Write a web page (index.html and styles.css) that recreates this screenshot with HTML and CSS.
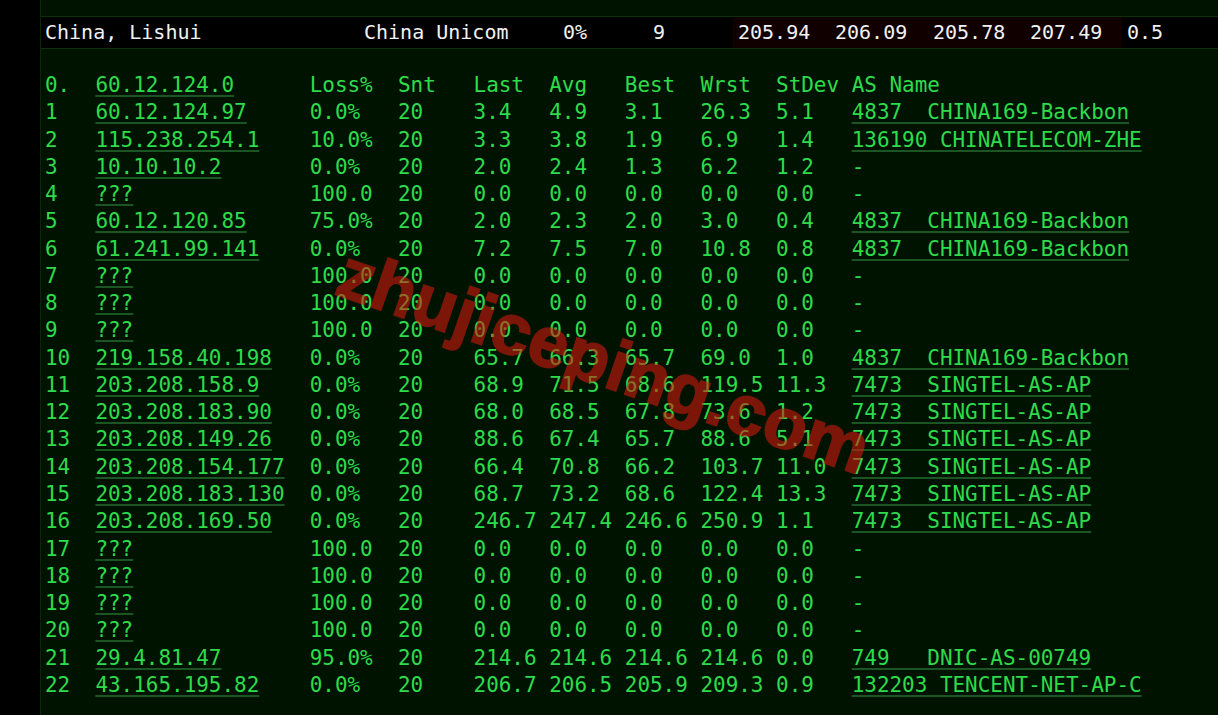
FILE: index.html
```html
<!DOCTYPE html>
<html>
<head>
<meta charset="utf-8">
<title>mtr</title>
<link rel="stylesheet" href="styles.css">
</head>
<body>
<div class="screen">
  <div class="gutter"></div>
  <div class="main">
    <div class="topgap"></div>
    <div class="summary">
      <div class="cell c1">China, Lishui</div>
      <div class="cell c2">China Unicom</div>
      <div class="cell c3">0%</div>
      <div class="cell c4">9</div>
      <div class="cell c5 hot">205.94</div>
      <div class="cell c6 hot">206.09</div>
      <div class="cell c7 hot">205.78</div>
      <div class="cell c8 hot">207.49</div>
      <div class="cell c9">0.5</div>
    </div>
    <div class="trace">
      <div class="row"><span>0.</span><span class="u">60.12.124.0</span><span>Loss%</span><span>Snt</span><span>Last</span><span>Avg</span><span>Best</span><span>Wrst</span><span>StDev</span><span>AS Name</span></div>
      <div class="row"><span>1</span><span class="u">60.12.124.97</span><span>0.0%</span><span>20</span><span>3.4</span><span>4.9</span><span>3.1</span><span>26.3</span><span>5.1</span><span class="u">4837  CHINA169-Backbon</span></div>
      <div class="row"><span>2</span><span class="u">115.238.254.1</span><span>10.0%</span><span>20</span><span>3.3</span><span>3.8</span><span>1.9</span><span>6.9</span><span>1.4</span><span class="u">136190 CHINATELECOM-ZHE</span></div>
      <div class="row"><span>3</span><span class="u">10.10.10.2</span><span>0.0%</span><span>20</span><span>2.0</span><span>2.4</span><span>1.3</span><span>6.2</span><span>1.2</span><span>-</span></div>
      <div class="row"><span>4</span><span class="u">???</span><span>100.0</span><span>20</span><span>0.0</span><span>0.0</span><span>0.0</span><span>0.0</span><span>0.0</span><span>-</span></div>
      <div class="row"><span>5</span><span class="u">60.12.120.85</span><span>75.0%</span><span>20</span><span>2.0</span><span>2.3</span><span>2.0</span><span>3.0</span><span>0.4</span><span class="u">4837  CHINA169-Backbon</span></div>
      <div class="row"><span>6</span><span class="u">61.241.99.141</span><span>0.0%</span><span>20</span><span>7.2</span><span>7.5</span><span>7.0</span><span>10.8</span><span>0.8</span><span class="u">4837  CHINA169-Backbon</span></div>
      <div class="row"><span>7</span><span class="u">???</span><span>100.0</span><span>20</span><span>0.0</span><span>0.0</span><span>0.0</span><span>0.0</span><span>0.0</span><span>-</span></div>
      <div class="row"><span>8</span><span class="u">???</span><span>100.0</span><span>20</span><span>0.0</span><span>0.0</span><span>0.0</span><span>0.0</span><span>0.0</span><span>-</span></div>
      <div class="row"><span>9</span><span class="u">???</span><span>100.0</span><span>20</span><span>0.0</span><span>0.0</span><span>0.0</span><span>0.0</span><span>0.0</span><span>-</span></div>
      <div class="row"><span>10</span><span class="u">219.158.40.198</span><span>0.0%</span><span>20</span><span>65.7</span><span>66.3</span><span>65.7</span><span>69.0</span><span>1.0</span><span class="u">4837  CHINA169-Backbon</span></div>
      <div class="row"><span>11</span><span class="u">203.208.158.9</span><span>0.0%</span><span>20</span><span>68.9</span><span>71.5</span><span>68.6</span><span>119.5</span><span>11.3</span><span class="u">7473  SINGTEL-AS-AP</span></div>
      <div class="row"><span>12</span><span class="u">203.208.183.90</span><span>0.0%</span><span>20</span><span>68.0</span><span>68.5</span><span>67.8</span><span>73.6</span><span>1.2</span><span class="u">7473  SINGTEL-AS-AP</span></div>
      <div class="row"><span>13</span><span class="u">203.208.149.26</span><span>0.0%</span><span>20</span><span>88.6</span><span>67.4</span><span>65.7</span><span>88.6</span><span>5.1</span><span class="u">7473  SINGTEL-AS-AP</span></div>
      <div class="row"><span>14</span><span class="u">203.208.154.177</span><span>0.0%</span><span>20</span><span>66.4</span><span>70.8</span><span>66.2</span><span>103.7</span><span>11.0</span><span class="u">7473  SINGTEL-AS-AP</span></div>
      <div class="row"><span>15</span><span class="u">203.208.183.130</span><span>0.0%</span><span>20</span><span>68.7</span><span>73.2</span><span>68.6</span><span>122.4</span><span>13.3</span><span class="u">7473  SINGTEL-AS-AP</span></div>
      <div class="row"><span>16</span><span class="u">203.208.169.50</span><span>0.0%</span><span>20</span><span>246.7</span><span>247.4</span><span>246.6</span><span>250.9</span><span>1.1</span><span class="u">7473  SINGTEL-AS-AP</span></div>
      <div class="row"><span>17</span><span class="u">???</span><span>100.0</span><span>20</span><span>0.0</span><span>0.0</span><span>0.0</span><span>0.0</span><span>0.0</span><span>-</span></div>
      <div class="row"><span>18</span><span class="u">???</span><span>100.0</span><span>20</span><span>0.0</span><span>0.0</span><span>0.0</span><span>0.0</span><span>0.0</span><span>-</span></div>
      <div class="row"><span>19</span><span class="u">???</span><span>100.0</span><span>20</span><span>0.0</span><span>0.0</span><span>0.0</span><span>0.0</span><span>0.0</span><span>-</span></div>
      <div class="row"><span>20</span><span class="u">???</span><span>100.0</span><span>20</span><span>0.0</span><span>0.0</span><span>0.0</span><span>0.0</span><span>0.0</span><span>-</span></div>
      <div class="row"><span>21</span><span class="u">29.4.81.47</span><span>95.0%</span><span>20</span><span>214.6</span><span>214.6</span><span>214.6</span><span>214.6</span><span>0.0</span><span class="u">749   DNIC-AS-00749</span></div>
      <div class="row"><span>22</span><span class="u">43.165.195.82</span><span>0.0%</span><span>20</span><span>206.7</span><span>206.5</span><span>205.9</span><span>209.3</span><span>0.9</span><span class="u">132203 TENCENT-NET-AP-C</span></div>
    </div>
    <div class="watermark">zhujiceping.com</div>
  </div>
</div>
</body>
</html>
```
FILE: styles.css
```css
html, body {
  margin: 0;
  padding: 0;
  background: #000;
}
body {
  width: 1218px;
  height: 715px;
  overflow: hidden;
}
.screen {
  display: flex;
  height: 715px;
}
.gutter {
  width: 40px;
  flex: none;
  background: #000;
}
.main {
  position: relative;
  flex: 1;
  background: #001300;
  border-left: 1px solid #0b260b;
  overflow: hidden;
}
.topgap {
  height: 16px;
  border-bottom: 1px solid #0e2e0e;
}
.summary {
  display: flex;
  height: 31px;
  background: #000;
  border-bottom: 1px solid #0e2e0e;
  margin-left: -1px;
  font-family: "DejaVu Sans Mono", "Liberation Mono", monospace;
  font-size: 20px;
  line-height: 31px;
  color: #f2f2f2;
}
.cell {
  padding-left: 5px;
  box-sizing: border-box;
  white-space: pre;
}
.c1 { width: 319px; }
.c2 { width: 199px; }
.c3 { width: 90px; }
.c4 { width: 85px; }
.c5 { width: 97px; }
.c6 { width: 98px; }
.c7 { width: 97px; }
.c8 { width: 97px; }
.c9 { flex: 1; }
.hot { background: #100000; }
.trace {
  padding: 23px 0 0 4px;
  font-family: "DejaVu Sans Mono", "Liberation Mono", monospace;
  font-size: 20.95px;
  line-height: 27.27px;
  color: #2edb4a;
}
.row {
  display: grid;
  grid-template-columns: 4ch 17ch 7ch 6ch 6ch 6ch 6ch 6ch 6ch auto;
  white-space: pre;
}
.u {
  text-decoration: underline;
  text-decoration-color: #1c5524;
  text-decoration-thickness: 2px;
  text-underline-offset: 3px;
  justify-self: start;
}
.watermark {
  position: absolute;
  left: 563px;
  top: 361px;
  transform: translate(-50%, -50%) rotate(19deg);
  font-family: "Liberation Sans", Arial, sans-serif;
  font-weight: bold;
  font-size: 71px;
  line-height: 1;
  color: #dc1a10;
  -webkit-text-stroke: 2px #dc1a10;
  opacity: 0.56;
  white-space: nowrap;
  pointer-events: none;
}
```
